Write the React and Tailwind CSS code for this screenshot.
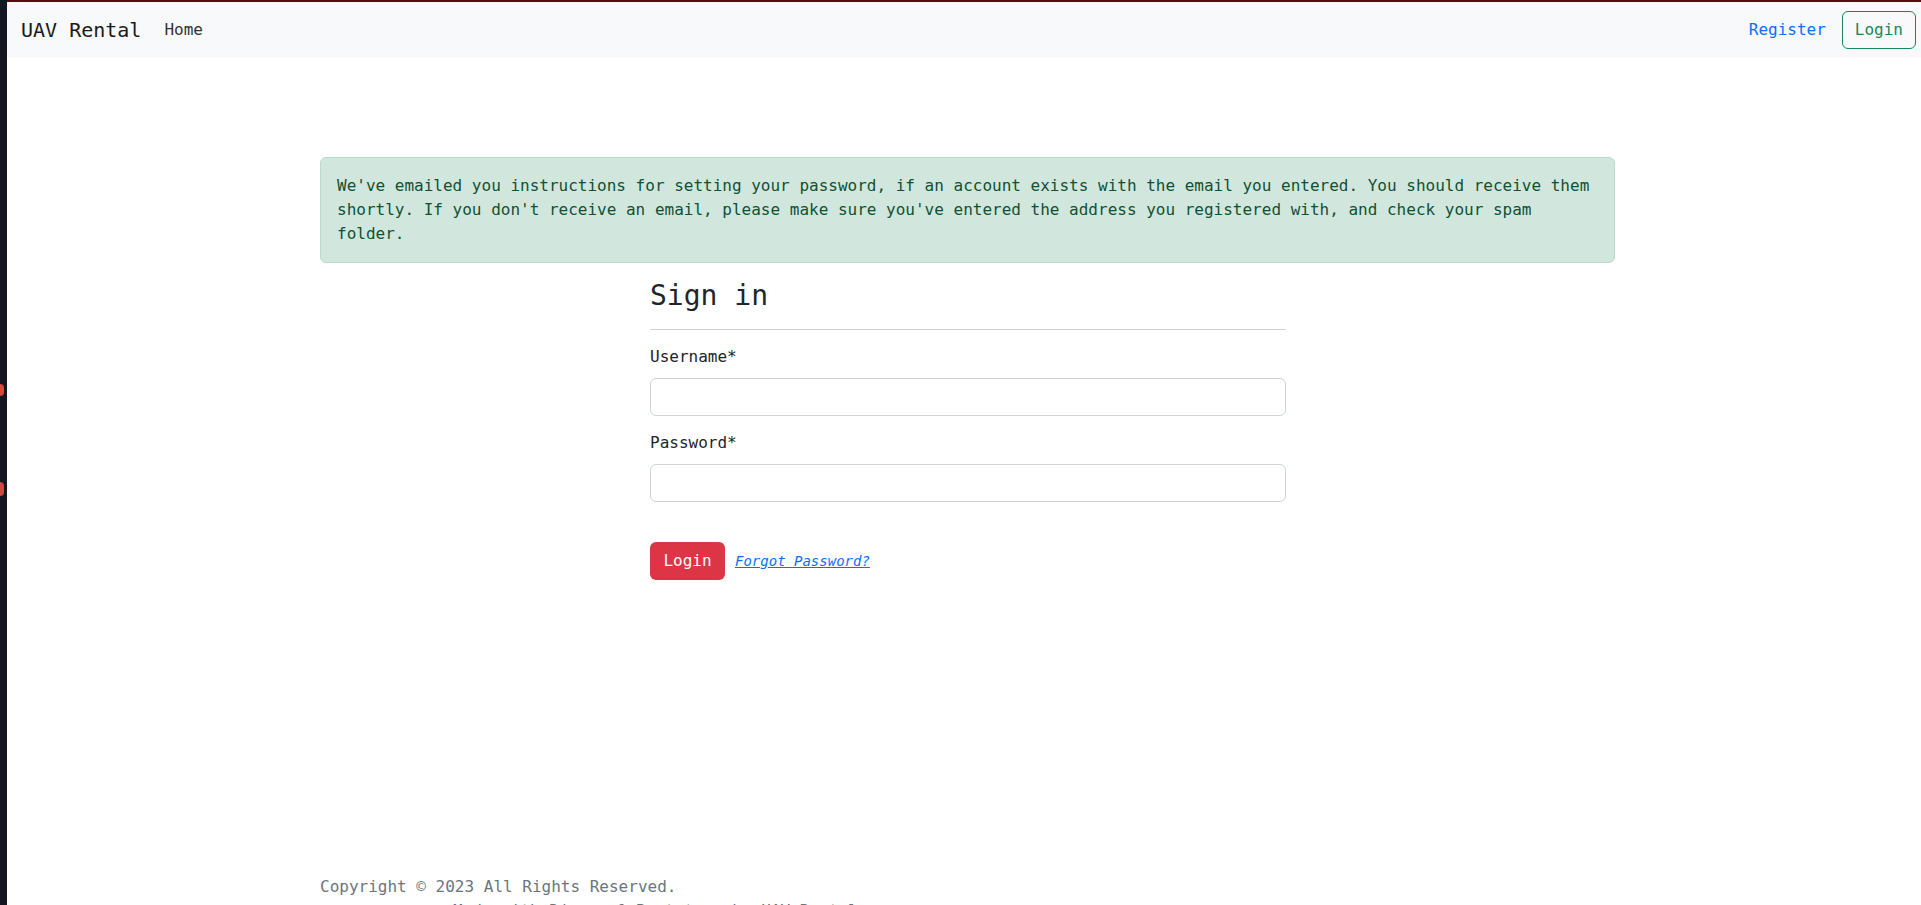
import React from "react";

export default function App() {
  return (
    <div className="flex min-h-screen bg-white font-['DejaVu_Sans_Mono',monospace] text-[#212529]">
      {/* desktop edge peeking through on the left */}
      <div className="w-[7px] shrink-0 bg-[#131722] flex flex-col">
        <div className="mt-[384px] h-[12px] w-[4px] rounded-r-full bg-[#d9473a]" />
        <div className="mt-[86px] h-[14px] w-[4px] rounded-r-full bg-[#c94a3e]" />
      </div>

      <div className="flex-1 flex flex-col">
        <div className="h-[2px] bg-[#5a0b12]" />

        {/* Navbar */}
        <nav className="h-[55px] bg-[#f8f9fa] flex items-center justify-between pl-[14px] pr-[5px]">
          <div className="flex items-center">
            <a className="text-[20px] text-[#1a1a1a] leading-[30px]">UAV Rental</a>
            <a className="ml-[23px] text-[16px] text-[#333333]">Home</a>
          </div>
          <div className="flex items-center">
            <a className="text-[16px] text-[#0d6efd]">Register</a>
            <button className="ml-[16px] h-[38px] px-[12px] border border-[#198754] rounded-[6px] text-[16px] text-[#198754] bg-transparent">
              Login
            </button>
          </div>
        </nav>

        <main className="w-[1319px] ml-[301px] px-3">
          {/* Alert */}
          <div className="mt-[100px] p-4 rounded-[6px] border border-[#badbcc] bg-[#d1e7dd] text-[#0f5132] text-[16px] leading-[24px]">
            We've emailed you instructions for setting your password, if an account exists with the email you entered. You should receive them shortly. If you don't receive an email, please make sure you've entered the address you registered with, and check your spam folder.
          </div>

          {/* Sign in form */}
          <div className="ml-[330px] w-[636px] mt-4">
            <div className="text-[28px] leading-[34px] pb-[16px] border-b border-[#d0d0d0]">
              Sign in
            </div>

            <div className="mt-[15px]">
              <label className="block text-[16px] leading-[24px] mb-[9px]">Username*</label>
              <input
                type="text"
                className="block w-full h-[38px] px-3 border border-[#ced4da] rounded-[6px] bg-white"
              />
            </div>

            <div className="mt-[15px]">
              <label className="block text-[16px] leading-[24px] mb-[9px]">Password*</label>
              <input
                type="password"
                className="block w-full h-[38px] px-3 border border-[#ced4da] rounded-[6px] bg-white"
              />
            </div>

            <div className="mt-[40px] flex items-center">
              <button className="h-[38px] w-[75px] rounded-[6px] bg-[#dc3545] text-white text-[16px]">
                Login
              </button>
              <a className="ml-[10px] text-[14px] italic underline text-[#0d6efd]">
                Forgot Password?
              </a>
            </div>
          </div>

          {/* Footer */}
          <footer className="mt-[295px] text-[16px] leading-[24px] text-[#6c757d]">
            <p>Copyright © 2023 All Rights Reserved.</p>
            <p className="pl-[133px]">Made with Django &amp; Bootstrap by UAV Rental</p>
          </footer>
        </main>
      </div>
    </div>
  );
}
